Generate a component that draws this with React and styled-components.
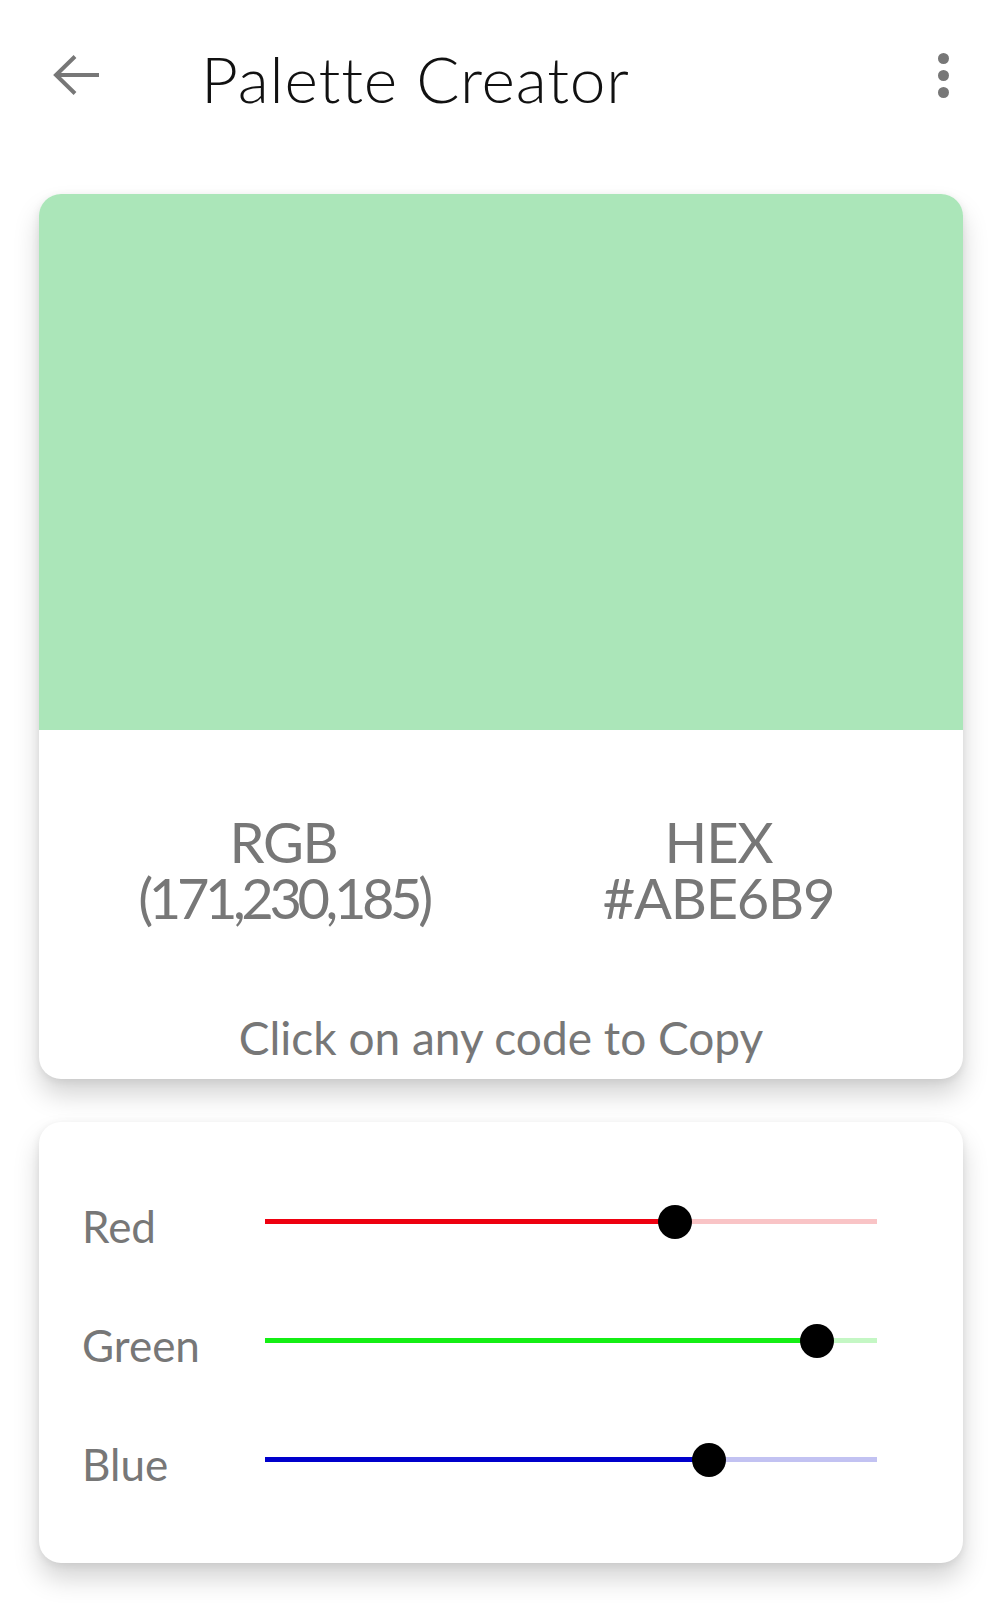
import styled, { createGlobalStyle } from "styled-components";

const GlobalStyle = createGlobalStyle`
  html, body {
    margin: 0;
    padding: 0;
    background: #ffffff;
    font-family: Lato, "Noto Sans", sans-serif;
  }
`;

const Page = styled.div`
  width: 1003px;
  min-height: 1603px;
  background: #fff;
  padding-bottom: 40px;
`;

const Header = styled.header`
  height: 150px;
  display: flex;
  align-items: center;
  padding: 0 40px 0 53px;
  box-sizing: border-box;
`;

const IconButton = styled.div`
  width: 46px;
  height: 46px;
  display: flex;
  align-items: center;
  justify-content: center;
  color: #777;
`;

const Title = styled.h1`
  flex: 1;
  margin: 0 0 0 102px;
  font-size: 64px;
  font-weight: 300;
  color: #111;
  letter-spacing: 0.8px;
  line-height: 1;
  padding-top: 8px;
`;

const Kebab = styled.div`
  display: flex;
  flex-direction: column;
  gap: 6px;
  margin-right: 14px;
`;

const Dot = styled.span`
  width: 11px;
  height: 11px;
  border-radius: 50%;
  background: #777;
`;

const Card = styled.section`
  margin: ${(p) => p.$top}px 40px 0 39px;
  background: #fff;
  border-radius: 22px;
  overflow: hidden;
  box-shadow: 0 16px 26px rgba(0, 0, 0, 0.17), 0 2px 8px rgba(0, 0, 0, 0.08);
`;

const Swatch = styled.div`
  height: 536px;
  background: ${(p) => p.$color};
`;

const Codes = styled.div`
  display: grid;
  grid-template-columns: 1fr 1fr;
  padding: 84px 27px 0;
`;

const Code = styled.div`
  text-align: center;
  color: #777;
  cursor: pointer;
`;

const CodeLine = styled.div`
  font-size: 56px;
  line-height: 56px;
  letter-spacing: ${(p) => (p.$tight ? "-4.4px" : "-1.2px")};
`;

const Hint = styled.p`
  margin: 89px 0 0;
  padding-bottom: 18px;
  text-align: center;
  font-size: 46px;
  line-height: 46px;
  color: #777;
`;

const Sliders = styled.div`
  padding: 40px 86px 44px 43px;
`;

const SliderRow = styled.div`
  display: grid;
  grid-template-columns: 183px 1fr;
  align-items: center;
  height: 119px;
`;

const Label = styled.span`
  font-size: 44px;
  color: #777;
  padding-top: 8px;
`;

const Track = styled.div`
  position: relative;
  height: 5px;
  background: ${(p) => p.$light};
`;

const Fill = styled.div`
  height: 100%;
  background: ${(p) => p.$color};
`;

const Thumb = styled.div`
  position: absolute;
  top: 50%;
  width: 34px;
  height: 34px;
  border-radius: 50%;
  background: #000;
  transform: translate(-50%, -50%);
`;

const channels = [
  { name: "Red", value: 171, color: "#ee0010", light: "#f9c4c6" },
  { name: "Green", value: 230, color: "#14ef14", light: "#c4f7c4" },
  { name: "Blue", value: 185, color: "#0000cc", light: "#c2c2f2" },
];

function Slider({ value, color, light }) {
  const pct = (value / 255) * 100;
  return (
    <Track $light={light}>
      <Fill $color={color} style={{ width: `${pct}%` }} />
      <Thumb style={{ left: `${pct}%` }} />
    </Track>
  );
}

export default function App() {
  return (
    <>
      <GlobalStyle />
      <Page>
        <Header>
          <IconButton>
            <svg width="46" height="42" viewBox="0 0 46 42" fill="none" stroke="currentColor" strokeWidth="4">
              <path d="M46 21H4" />
              <path d="M22 2.5L3 21l19 18.5" />
            </svg>
          </IconButton>
          <Title>Palette Creator</Title>
          <Kebab>
            <Dot />
            <Dot />
            <Dot />
          </Kebab>
        </Header>

        <Card $top={44}>
          <Swatch $color="#ABE6B9" />
          <Codes>
            <Code>
              <CodeLine>RGB</CodeLine>
              <CodeLine $tight>(171,230,185)</CodeLine>
            </Code>
            <Code>
              <CodeLine>HEX</CodeLine>
              <CodeLine>#ABE6B9</CodeLine>
            </Code>
          </Codes>
          <Hint>Click on any code to Copy</Hint>
        </Card>

        <Card $top={43}>
          <Sliders>
            {channels.map((c) => (
              <SliderRow key={c.name}>
                <Label>{c.name}</Label>
                <Slider value={c.value} color={c.color} light={c.light} />
              </SliderRow>
            ))}
          </Sliders>
        </Card>
      </Page>
    </>
  );
}
